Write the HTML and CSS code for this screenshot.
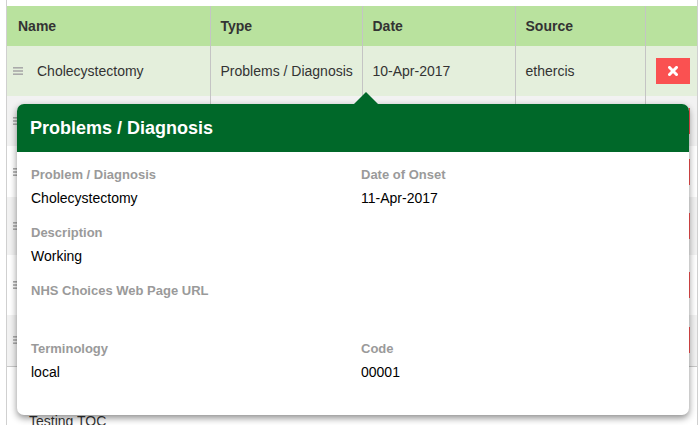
FILE: index.html
```html
<!DOCTYPE html>
<html>
<head>
<meta charset="utf-8">
<link rel="stylesheet" href="styles.css">
</head>
<body>
<div class="panel">
  <table class="grid">
    <colgroup>
      <col class="c-name"><col class="c-type"><col class="c-date"><col class="c-source"><col class="c-act">
    </colgroup>
    <thead>
      <tr class="head">
        <th>Name</th><th>Type</th><th>Date</th><th>Source</th><th></th>
      </tr>
    </thead>
    <tbody>
      <tr class="row sel">
        <td><span class="name"><svg class="drag" width="10" height="8" viewBox="0 0 10 8"><rect x="0" y="0" width="10" height="1.6" fill="#aaa"/><rect x="0" y="3.2" width="10" height="1.6" fill="#aaa"/><rect x="0" y="6.4" width="10" height="1.6" fill="#aaa"/></svg>Cholecystectomy</span></td>
        <td>Problems / Diagnosis</td>
        <td>10-Apr-2017</td>
        <td>ethercis</td>
        <td><span class="del"><svg width="10" height="10" viewBox="0 0 10 10"><path d="M1.5 1.5 L8.5 8.5 M8.5 1.5 L1.5 8.5" stroke="#fff" stroke-width="3" stroke-linecap="square"/></svg></span></td>
      </tr>
      <tr class="row odd h50">
        <td><span class="name"><svg class="drag" width="10" height="8" viewBox="0 0 10 8"><rect x="0" y="0" width="10" height="1.6" fill="#aaa"/><rect x="0" y="3.2" width="10" height="1.6" fill="#aaa"/><rect x="0" y="6.4" width="10" height="1.6" fill="#aaa"/></svg>Asthma</span></td>
        <td>Problems / Diagnosis</td><td>02-Mar-2017</td><td>ethercis</td>
        <td><span class="del"><svg width="10" height="10" viewBox="0 0 10 10"><path d="M1.5 1.5 L8.5 8.5 M8.5 1.5 L1.5 8.5" stroke="#fff" stroke-width="3" stroke-linecap="square"/></svg></span></td>
      </tr>
      <tr class="row even h51">
        <td><span class="name"><svg class="drag" width="10" height="8" viewBox="0 0 10 8"><rect x="0" y="0" width="10" height="1.6" fill="#aaa"/><rect x="0" y="3.2" width="10" height="1.6" fill="#aaa"/><rect x="0" y="6.4" width="10" height="1.6" fill="#aaa"/></svg>Hypertension</span></td>
        <td>Problems / Diagnosis</td><td>14-Feb-2017</td><td>ethercis</td>
        <td><span class="del"><svg width="10" height="10" viewBox="0 0 10 10"><path d="M1.5 1.5 L8.5 8.5 M8.5 1.5 L1.5 8.5" stroke="#fff" stroke-width="3" stroke-linecap="square"/></svg></span></td>
      </tr>
      <tr class="row odd h58">
        <td><span class="name"><svg class="drag" width="10" height="8" viewBox="0 0 10 8"><rect x="0" y="0" width="10" height="1.6" fill="#aaa"/><rect x="0" y="3.2" width="10" height="1.6" fill="#aaa"/><rect x="0" y="6.4" width="10" height="1.6" fill="#aaa"/></svg>Diabetes</span></td>
        <td>Problems / Diagnosis</td><td>20-Jan-2017</td><td>ethercis</td>
        <td><span class="del"><svg width="10" height="10" viewBox="0 0 10 10"><path d="M1.5 1.5 L8.5 8.5 M8.5 1.5 L1.5 8.5" stroke="#fff" stroke-width="3" stroke-linecap="square"/></svg></span></td>
      </tr>
      <tr class="row even h60">
        <td><span class="name"><svg class="drag" width="10" height="8" viewBox="0 0 10 8"><rect x="0" y="0" width="10" height="1.6" fill="#aaa"/><rect x="0" y="3.2" width="10" height="1.6" fill="#aaa"/><rect x="0" y="6.4" width="10" height="1.6" fill="#aaa"/></svg>Migraine</span></td>
        <td>Problems / Diagnosis</td><td>05-Jan-2017</td><td>ethercis</td>
        <td><span class="del"><svg width="10" height="10" viewBox="0 0 10 10"><path d="M1.5 1.5 L8.5 8.5 M8.5 1.5 L1.5 8.5" stroke="#fff" stroke-width="3" stroke-linecap="square"/></svg></span></td>
      </tr>
      <tr class="row odd h51">
        <td><span class="name"><svg class="drag" width="10" height="8" viewBox="0 0 10 8"><rect x="0" y="0" width="10" height="1.6" fill="#aaa"/><rect x="0" y="3.2" width="10" height="1.6" fill="#aaa"/><rect x="0" y="6.4" width="10" height="1.6" fill="#aaa"/></svg>Eczema</span></td>
        <td>Problems / Diagnosis</td><td>12-Dec-2016</td><td>ethercis</td>
        <td><span class="del"><svg width="10" height="10" viewBox="0 0 10 10"><path d="M1.5 1.5 L8.5 8.5 M8.5 1.5 L1.5 8.5" stroke="#fff" stroke-width="3" stroke-linecap="square"/></svg></span></td>
      </tr>
    </tbody>
  </table>
  <div class="after">Testing TOC</div>

  <div class="popup">
    <span class="arrow"></span>
    <div class="popup-head">Problems / Diagnosis</div>
    <div class="popup-body">
      <div class="field"><div class="label">Problem / Diagnosis</div><div class="value">Cholecystectomy</div></div>
      <div class="field"><div class="label">Date of Onset</div><div class="value">11-Apr-2017</div></div>
      <div class="field"><div class="label">Description</div><div class="value">Working</div></div>
      <div class="field"></div>
      <div class="field"><div class="label">NHS Choices Web Page URL</div><div class="value">&nbsp;</div></div>
      <div class="field"></div>
      <div class="field last"><div class="label">Terminology</div><div class="value">local</div></div>
      <div class="field last"><div class="label">Code</div><div class="value">00001</div></div>
    </div>
  </div>
</div>
</body>
</html>
```
FILE: styles.css
```css
html, body {
  margin: 0;
  padding: 0;
  background: #fff;
  font-family: "Liberation Sans", Arial, sans-serif;
  color: #333;
  overflow: hidden;
}

.panel {
  position: relative;
  margin-left: 6px;
  width: 690px;
  padding-top: 6px;
  border-left: 1px solid #d0d0d0;
  border-right: 1px solid #d0d0d0;
  height: 419px;
}

.grid {
  border-collapse: collapse;
  table-layout: fixed;
  width: 690px;
  font-size: 14px;
  border-bottom: 1px solid #c8c8c8;
}

.c-name { width: 203px; }
.c-type { width: 152px; }
.c-date { width: 153px; }
.c-source { width: 130px; }
.c-act { width: 52px; }

.grid th,
.grid td {
  padding: 0 0 0 10px;
  text-align: left;
  vertical-align: middle;
  border-left: 1px solid #c4c4c4;
  white-space: nowrap;
  overflow: hidden;
}

.grid th:first-child,
.grid td:first-child {
  border-left: none;
  padding-left: 11px;
}

.grid td:first-child {
  padding-left: 6px;
}

.head {
  height: 40px;
  background: #b9e29e;
}

.head th {
  font-weight: bold;
  color: #333;
}

.row { height: 50px; }
.sel { background: #e4efdc; }
.odd { background: #f2f2f2; }
.even { background: #fff; }
.h50 { height: 50px; }
.h51 { height: 51px; }
.h58 { height: 58px; }
.h60 { height: 60px; }

.name {
  display: flex;
  align-items: center;
  gap: 14px;
}

.drag { display: block; }

.del {
  display: flex;
  align-items: center;
  justify-content: center;
  width: 34px;
  height: 26px;
  background: #fa5151;
}

.after {
  padding: 44px 0 0 22px;
  font-size: 14px;
  line-height: 20px;
  color: #333;
}

.popup {
  position: absolute;
  left: 10px;
  top: 104px;
  width: 672px;
  background: #fff;
  border-radius: 7px;
  box-shadow: 0 3px 7px rgba(0, 0, 0, 0.45);
}

.arrow {
  position: absolute;
  left: 337px;
  top: -12px;
  width: 0;
  height: 0;
  border-left: 12px solid transparent;
  border-right: 12px solid transparent;
  border-bottom: 12px solid #006829;
}

.popup-head {
  height: 48px;
  display: flex;
  align-items: center;
  padding-left: 13px;
  background: #006829;
  color: #fff;
  font-weight: bold;
  font-size: 18px;
  border-radius: 7px 7px 0 0;
}

.popup-body {
  display: grid;
  grid-template-columns: 330px 1fr;
  padding: 13px 14px 33px 14px;
}

.field {
  margin-bottom: 15px;
}

.field.last {
  margin-bottom: 0;
}

.label {
  font-size: 13px;
  font-weight: bold;
  color: #9a9a9a;
  line-height: 20px;
  margin-bottom: 3px;
}

.value {
  font-size: 14px;
  color: #000;
  line-height: 20px;
}
```
